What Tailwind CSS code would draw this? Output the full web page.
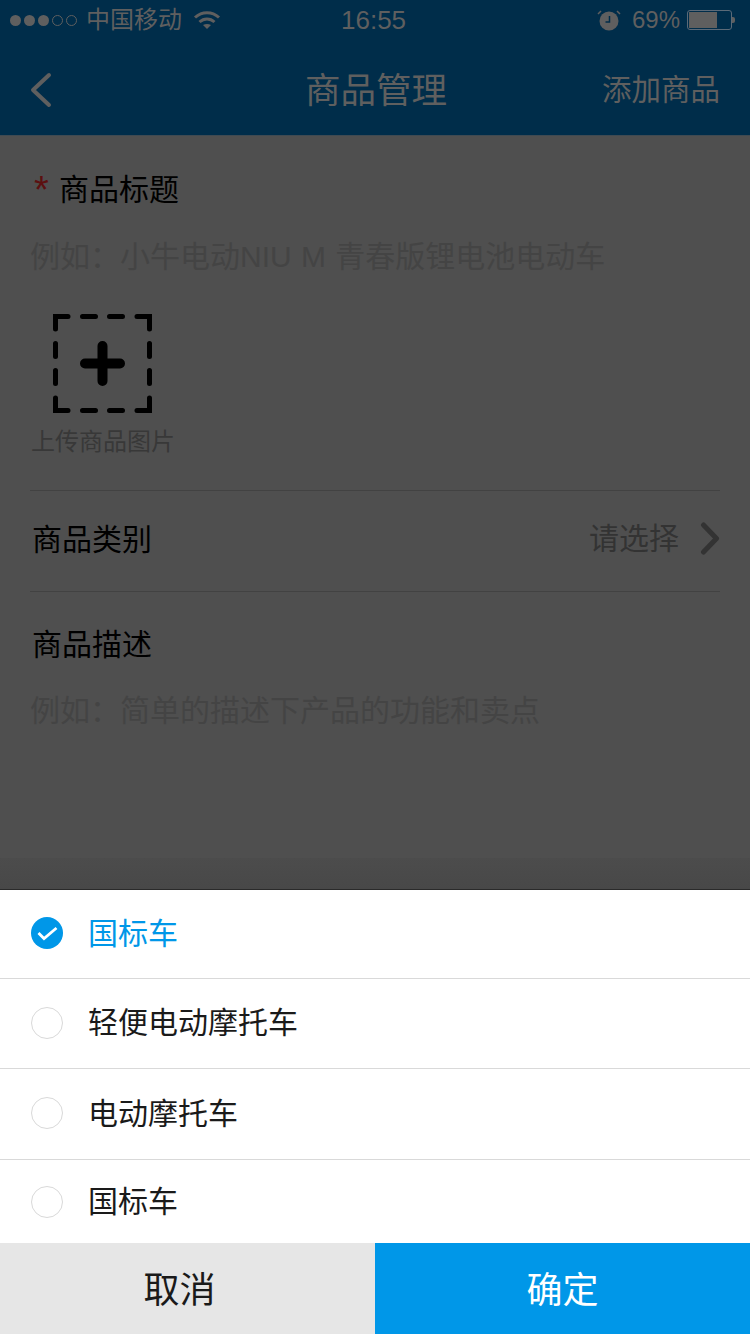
<!DOCTYPE html>
<html lang="zh-CN">
<head>
    <meta charset="UTF-8">
    <meta name="viewport" content="width=device-width, initial-scale=1.0">
    <title>商品管理</title>
    <script src="https://cdn.jsdelivr.net/npm/@tailwindcss/browser@4"></script>
</head>
<body class="w-[750px] h-[1334px] overflow-hidden bg-[#4f4f4f] font-['Liberation_Sans','Noto_Sans_CJK_SC',sans-serif]">
    <div class="flex flex-col h-[1334px]">
        <!-- header -->
        <header class="h-[136px] bg-[#002d4a] border-b border-[#3f4a52] text-[#5f5f5f] shrink-0">
            <div class="h-[40px] pl-[10px] pr-[15px] flex items-center justify-between relative text-[24px]">
                <div class="flex items-center">
                    <span class="w-[11px] h-[11px] rounded-full bg-[#5f5f5f] mr-[3px]"></span>
                    <span class="w-[11px] h-[11px] rounded-full bg-[#5f5f5f] mr-[3px]"></span>
                    <span class="w-[11px] h-[11px] rounded-full bg-[#5f5f5f] mr-[3px]"></span>
                    <span class="w-[11px] h-[11px] rounded-full border border-[#5f5f5f] mr-[3px]"></span>
                    <span class="w-[11px] h-[11px] rounded-full border border-[#5f5f5f]"></span>
                    <span class="ml-[9px] leading-none">中国移动</span>
                    <svg class="ml-[11px]" width="28" height="20" viewBox="0 0 28 20" fill="none" stroke="#5f5f5f" stroke-width="3">
                        <path d="M2 7.5C9 1 19 1 26 7.5"/>
                        <path d="M6.5 12C11 8 17 8 21.500 12"/>
                        <path d="M14 19l-4-4c2.500-1.500 5.500-1.500 8 0z" fill="#5f5f5f" stroke="none"/>
                    </svg>
                </div>
                <span class="absolute left-[341px] top-[4px] text-[26px] leading-[32px]">16:55</span>
                <div class="flex items-center text-[24px] leading-none">
                    <svg class="mr-[11px]" width="24" height="22" viewBox="0 0 24 22">
                        <circle cx="12" cy="12" r="9.500" fill="#5f5f5f"/>
                        <path d="M12.500 7v6H8.500" fill="none" stroke="#002d4a" stroke-width="1.500"/>
                        <path d="M1 5l3-3M23 5l-3-3" stroke="#5f5f5f" stroke-width="1.500"/>
                    </svg>
                    <span>69%</span>
                    <div class="ml-[7px] flex items-center">
                        <div class="w-[45px] h-[20px] rounded-[3px] border border-[#5b6a78] p-[1px]">
                            <div class="w-[28px] h-full bg-[#5f5f5f]"></div>
                        </div>
                        <div class="w-[3px] h-[6px] rounded-r-[2px] bg-[#5f5f5f]"></div>
                    </div>
                </div>
            </div>
            <div class="h-[95px] pt-[4px] pl-[30px] pr-[30px] flex items-center justify-between relative">
                <svg width="22" height="36" viewBox="0 0 22 36" fill="none" stroke="#5f5f5f" stroke-width="4" stroke-linecap="round" stroke-linejoin="round">
                    <path d="M19 3L3 18l16 15"/>
                </svg>
                <h1 class="absolute left-[305px] top-[28px] text-[35.500px] leading-[46px]">商品管理</h1>
                <span class="text-[29.500px] leading-[40px]">添加商品</span>
            </div>
        </header>

        <!-- form -->
        <main class="flex-1 px-[30px] relative">
            <div class="pt-[34px] flex items-center h-[74px] text-[30px] leading-[44px] text-black">
                <span class="text-[#5c1010] w-[30px] pl-[4px] text-[38px] font-['Liberation_Sans']">*</span>
                <span class="-ml-[1px]">商品标题</span>
            </div>
            <p class="mt-[22px] text-[30px] leading-[50px] text-[#444444] whitespace-nowrap [word-spacing:1px]">例如：小牛电动NIU M 青春版锂电池电动车</p>
            <div class="mt-[32px] ml-[23px] w-[100px] h-[100px]">
                <svg width="100" height="100" viewBox="0 0 100 100" fill="none" stroke="#000" stroke-width="5" stroke-linecap="round" stroke-linejoin="miter">
                    <path d="M2.500 15V2.500H15M29.500 2.500h13M56.500 2.500h13M84 2.500h12.500V15M96.500 29.500v13M96.500 56.500v13M96.500 84v12.500H84M69.500 96.500h-13M42.500 96.500h-13M15 96.500H2.500V84M2.500 69.500v-13M2.500 42.500v-13"/>
                    <path d="M49.500 32v35M32 49.500h35" stroke-width="10"/>
                </svg>
            </div>
            <p class="mt-[11px] ml-[1px] text-[24px] leading-[34px] text-[#383838]">上传商品图片</p>
            <div class="mt-[31px] border-t border-[#424242] h-[101px] pb-[4px] flex items-center justify-between text-[30px] pl-[2px]">
                <span class="text-black">商品类别</span>
                <div class="flex items-center text-[#333333]">
                    <span class="-mt-[2px]">请选择</span>
                    <svg class="ml-[21px]" width="20" height="34" viewBox="0 0 20 34" fill="none" stroke="#333333" stroke-width="5" stroke-linecap="round" stroke-linejoin="round">
                        <path d="M3.500 3l13 13.500L3.500 30"/>
                    </svg>
                </div>
            </div>
            <div class="border-t border-[#424242] pt-[31px] pl-[2px] text-[30px] leading-[44px] text-black">商品描述</div>
            <p class="mt-[19px] text-[30px] leading-[50px] text-[#444444] whitespace-nowrap">例如：简单的描述下产品的功能和卖点</p>
            <div class="absolute left-0 right-0 bottom-0 h-[31px] bg-linear-to-b from-[#4c4c4c] to-[#484848]"></div>
        </main>

        <!-- category sheet -->
        <section class="bg-white shrink-0 border-t border-[#2a2a2a]">
            <div class="h-[88px] pb-[2px] flex items-center pl-[31px] text-[30px] text-[#0097e8]">
                <svg class="mr-[26px]" width="32" height="32" viewBox="0 0 32 32">
                    <circle cx="16" cy="16" r="16" fill="#0097e8"/>
                    <path d="M7.500 16l5.500 5.500L25.500 11" fill="none" stroke="#fff" stroke-width="2.800"/>
                </svg>
                <span class="-ml-[1px]">国标车</span>
            </div>
            <div class="h-[90px] pb-[2px] flex items-center pl-[31px] text-[30px] text-[#1a1a1a] border-t border-[#d9d9d9]">
                <span class="w-[32px] h-[32px] rounded-full border border-[#d9d9d9] mr-[25px]"></span>
                <span>轻便电动摩托车</span>
            </div>
            <div class="h-[91px] pb-[2px] flex items-center pl-[31px] text-[30px] text-[#1a1a1a] border-t border-[#d9d9d9]">
                <span class="w-[32px] h-[32px] rounded-full border border-[#d9d9d9] mr-[26px]"></span>
                <span class="-ml-[1px]">电动摩托车</span>
            </div>
            <div class="h-[84px] flex items-center pl-[31px] text-[30px] text-[#1a1a1a] border-t border-[#d9d9d9]">
                <span class="w-[32px] h-[32px] rounded-full border border-[#d9d9d9] mr-[25px]"></span>
                <span>国标车</span>
            </div>
            <div class="h-[91px] flex text-[36px]">
                <button class="w-[375px] pt-[5px] bg-[#e6e6e6] text-[#1a1a1a] pr-[16px]">取消</button>
                <button class="w-[375px] pt-[5px] bg-[#0097e8] text-white">确定</button>
            </div>
        </section>
    </div>
</body>
</html>
